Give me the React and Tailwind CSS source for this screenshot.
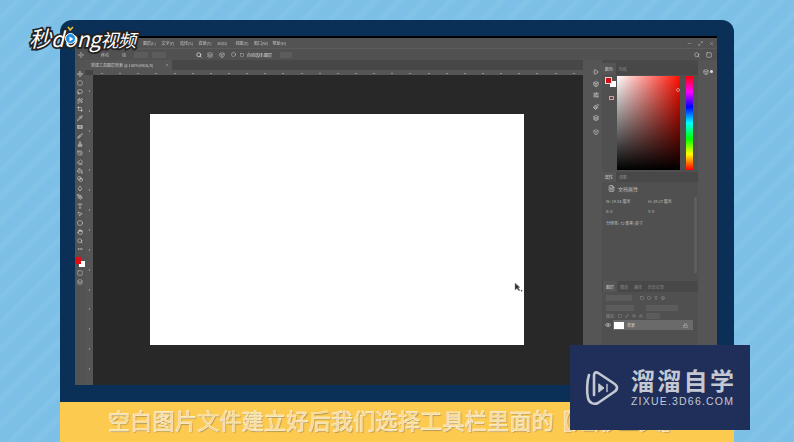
import React from "react";
import {
  Move, SquareDashed, Lasso, Wand2, Crop, Pipette, Bandage, Brush, Stamp, History,
  Eraser, PaintBucket, Blend, Droplet, PenTool, Type, MousePointer2, Circle, Hand, Search,
  MoreHorizontal, Square, Layers, Play, SlidersHorizontal, Paintbrush,
  Box, Eye, Lock, Minus, Maximize2, X, FileText,
} from "lucide-react";

const cjk = { fontFamily: '"Noto Sans CJK SC", "Noto Sans", sans-serif' };

const menus = ["图层(L)", "文字(Y)", "选择(S)", "滤镜(T)", "3D(D)", "视图(V)", "窗口(W)", "帮助(H)"];
const tools = [Move, SquareDashed, Lasso, Wand2, Crop, Pipette, Bandage, Brush, Stamp, History, Eraser, PaintBucket, Blend, Droplet, PenTool, Type, MousePointer2, Circle, Hand, Search, MoreHorizontal];
const dockIcons = [Play, Box, SlidersHorizontal, Paintbrush, Layers];

const Tab = ({ children, active }) => (
  <span className={`h-full flex items-center px-[3px] text-[4px] ${active ? "bg-[#555] text-[#ccc]" : "text-[#8a8a8a]"}`}>
    {children}
  </span>
);

const Field = ({ w }) => <span className="h-[6px] bg-[#5c5c5c]" style={{ width: w }} />;

const Toolbar = () => (
  <div className="w-[10px] bg-[#535353] flex flex-col items-center pt-[10px] blur-[0.3px]">
    {tools.map((Icon, i) => (
      <div key={i} className="h-[8.75px] flex items-center justify-center shrink-0">
        <Icon size={6} strokeWidth={2.2} className="text-[#d8d8d8]" />
      </div>
    ))}
    <div className="relative w-[10px] h-[11px] mt-[3px] shrink-0">
      <span className="absolute left-[4px] top-[4px] w-[6px] h-[6px] bg-white" />
      <span className="absolute left-[0px] top-[0px] w-[6px] h-[7px] bg-[#e00e12]" />
    </div>
    <Square size={6} className="text-[#ccc] mt-[2px]" />
    <Layers size={6} className="text-[#ccc] mt-[3px]" />
  </div>
);

const ColorPanel = () => (
  <div className="h-[97px] flex pl-[2px] pr-[5px] pt-[1px] bg-[#505050]">
    <div className="w-[13px] relative">
      <span className="absolute left-[6px] top-[5px] w-[6px] h-[6px] bg-white" />
      <span className="absolute left-[1px] top-[1px] w-[7px] h-[7px] bg-[#d40f14] border border-[#ddd]" />
      <span className="absolute left-[5px] top-[20px] w-[5px] h-[4px] border border-[#d99]" />
    </div>
    <div className="relative w-[63px] h-[94px] bg-[linear-gradient(to_top,#000,transparent),linear-gradient(to_right,#fff,#ff0f00)]">
      <span className="absolute right-[0px] top-[12px] w-[4px] h-[4px] rounded-full border border-[#d88]" />
    </div>
    <div className="ml-[6px] w-[7px] h-[94px] bg-[linear-gradient(to_bottom,#f00_0%,#f0f_17%,#00f_33%,#0ff_50%,#0f0_67%,#ff0_83%,#f00_100%)]" />
  </div>
);

const Properties = () => (
  <div className="h-[99px] bg-[#505050] text-[4px] text-[#bdbdbd] px-[4px] relative" style={cjk}>
    <div className="flex items-center gap-[3px] pt-[3px] pl-[2px]">
      <FileText size={7} className="text-[#ddd]" />
      <span className="text-[5px]">文档属性</span>
    </div>
    <div className="grid grid-cols-2 mt-[5px] gap-y-[4px] w-[84px]">
      <span>W: 19.54 厘米</span>
      <span>H: 29.27 厘米</span>
      <span>X: 0</span>
      <span>Y: 0</span>
    </div>
    <div className="mt-[6px]">分辨率: 72 像素/英寸</div>
    <span className="absolute right-[1px] top-[15px] w-[3px] h-[76px] bg-[#5e5e5e]" />
  </div>
);

const LayersPanel = () => (
  <div className="flex-1 bg-[#505050] text-[4px] text-[#999]" style={cjk}>
    <div className="h-[11px] bg-[#484848] flex items-center pl-[1px] text-[#999]">
      <Tab active>图层</Tab>
      <Tab>通道</Tab>
      <Tab>路径</Tab>
      <Tab>历史记录</Tab>
    </div>
    <div className="h-[11px] flex items-center gap-[8px] px-[4px]">
      <Field w={26} />
      <span className="flex gap-[3px] text-[#aaa]">
        <Square size={4} />
        <Circle size={4} />
        <Type size={4} />
        <Box size={4} />
      </span>
    </div>
    <div className="h-[9px] flex items-center gap-[12px] px-[4px]">
      <Field w={28} />
      <Field w={32} />
    </div>
    <div className="h-[8px] flex items-center gap-[3px] px-[4px]">
      <span>锁定:</span>
      <Square size={4} />
      <Brush size={4} />
      <Move size={4} />
      <Lock size={4} />
      <Field w={14} />
    </div>
    <div className="h-[10px] flex items-center">
      <span className="w-[11px] flex justify-center">
        <Eye size={6} className="text-[#ddd]" />
      </span>
      <div className="w-[80px] h-full bg-[#6a6a6a] flex items-center pl-[1px]">
        <span className="w-[10px] h-[7px] bg-white" />
        <span className="ml-[3px] text-[#ddd]">背景</span>
        <Lock size={5} className="ml-auto mr-[5px] text-[#ccc]" />
      </div>
    </div>
  </div>
);

const Photoshop = () => (
  <div className="h-[347px] flex flex-col bg-[#535353]" style={cjk}>
    <div className="h-[10px] flex items-center pl-[68px] pr-[3px] text-[4px] text-[#c4c4c4] blur-[0.2px]">
      {menus.map((m) => (
        <span key={m} className="w-[18.5px] shrink-0">{m}</span>
      ))}
      <span className="ml-auto flex gap-[6px] text-[#bbb]">
        <Minus size={5} />
        <Maximize2 size={5} />
        <X size={5} />
      </span>
    </div>
    <div className="h-[12px] border-t border-[#5c5c5c] bg-[#515151] flex items-center pl-[3px] pr-[5px] text-[4px] text-[#bbb] blur-[0.2px]">
      <Move size={6} />
      <span className="ml-[17px]">移动</span>
      <span className="ml-[13px]">组</span>
      <span className="ml-[8px] w-[60px] flex gap-[4px]">
        <Field w={14} />
        <Field w={14} />
      </span>
      <Search size={6} strokeWidth={3} className="ml-[2px] text-[#ddd]" />
      <Layers size={6} className="ml-[5px] text-[#ccc]" />
      <Box size={6} className="ml-[6px] text-[#ccc]" />
      <Circle size={5} className="ml-[6px] text-[#ddd]" />
      <Square size={4} className="ml-[4px] text-[#ddd]" />
      <span className="ml-[3px] text-[#ddd]">自动选择:图层</span>
      <span className="ml-[8px] flex"><Field w={12} /></span>
      <span className="ml-auto flex gap-[6px] text-[#ddd]">
        <Search size={6} />
        <Square size={6} />
      </span>
    </div>
    <div className="flex-1 flex min-h-0">
      <Toolbar />
      <div className="flex-1 flex flex-col min-w-0 bg-[#444]">
        <div className="h-[10px] flex items-stretch bg-[#474747]">
          <span className="w-[87px] bg-[#555] flex items-center justify-between pl-[6px] pr-[3px] text-[4px] text-[#c8c8c8] blur-[0.2px]">
            新建工具图层草案 @ 100%(RGB/8)
            <X size={4} />
          </span>
        </div>
        <div className="h-[5px] bg-[#555] ml-[8px] flex justify-around items-end pb-[1px]">
          {Array.from({ length: 27 }).map((_, i) => (
            <span key={i} className="w-[2px] h-[1px] bg-[#8d8d8d]" />
          ))}
        </div>
        <div className="flex-1 flex min-h-0">
          <div className="w-[8px] bg-[#555] flex flex-col justify-around items-center py-[6px]">
            {Array.from({ length: 15 }).map((_, i) => (
              <span key={i} className="w-[1px] h-[2px] bg-[#8d8d8d]" />
            ))}
          </div>
          <div className="flex-1 bg-[#282828] pl-[57px] pt-[39px] relative">
            <div className="w-[374px] h-[231px] bg-white" />
            <svg className="absolute left-[421px] top-[208px]" width="10" height="10" viewBox="0 0 10 10">
              <path d="M1 0 L1 7 L3 5.4 L5 8 L5.8 7 L4.2 4.8 L6 4.4 Z" fill="#2c2c2c" stroke="#999" strokeWidth="0.5" />
              <circle cx="7.6" cy="7.8" r="0.8" fill="#333" />
            </svg>
          </div>
        </div>
      </div>
      <div className="w-[134px] flex">
        <div className="w-[19px] flex flex-col items-center pl-[6px] pt-[9px] gap-[5.5px] bg-[#555]">
          {dockIcons.map((Icon, i) => (
            <Icon key={i} size={6} strokeWidth={2.4} className="text-[#ddd]" />
          ))}
          <Box size={6} className="mt-[2.5px] text-[#ccc]" />
        </div>
        <div className="w-[96px] flex flex-col blur-[0.2px]">
          <div className="h-[3px] bg-[#4a4a4a]" />
          <div className="h-[12px] bg-[#484848] flex items-center text-[4px]">
            <Tab active>颜色</Tab>
            <Tab>色板</Tab>
          </div>
          <ColorPanel />
          <div className="h-[10px] bg-[#484848] flex items-center text-[4px]">
            <Tab active>属性</Tab>
            <Tab>调整</Tab>
          </div>
          <Properties />
          <LayersPanel />
        </div>
        <div className="w-[19px] bg-[#555] flex justify-center pt-[9px] gap-[1px] text-[#ddd]">
          <Box size={6} />
          <span className="w-[3px] h-[3px] mt-[1px] rounded-full bg-[#ddd]" />
        </div>
      </div>
    </div>
  </div>
);

const App = () => (
  <div className="relative w-[794px] h-[442px] overflow-hidden bg-[#7fc1e7] bg-[repeating-linear-gradient(135deg,#7dc0e7_0px,#7dc0e7_9px,#84c4e9_13px,#7dc0e7_18px)]">
    <div className="ml-[60px] mt-[20px] w-[674px] flex flex-col">
      <div className="h-[382px] bg-[#0a3058] rounded-t-[12px] pl-[15px] pr-[17px] pt-[16px]">
        <div className="h-[2px] bg-black" />
        <Photoshop />
      </div>
      <div className="h-[40px] bg-[#fdca50] pl-[48px] pt-[3px] whitespace-nowrap text-[22px] tracking-[0.3px] leading-[28px] text-[#f8d27a] [-webkit-text-stroke:0.45px_#fff] [text-shadow:1px_1px_1px_#a8925a]" style={cjk}>
        空白图片文件建立好后我们选择工具栏里面的<span className="-ml-[4px]">【矩形工具】</span>
      </div>
    </div>

    {/* site logo, top left */}
    <div className="absolute left-[29px] top-[22px] flex items-baseline italic text-white leading-[30px] [-webkit-text-stroke:3.5px_#222] [paint-order:stroke_fill] [font-family:'Noto_Sans_CJK_SC',sans-serif]">
      <span className="text-[22px]">秒</span>
      <span className="text-[21px]">d</span>
      <span className="relative text-[21px]">
        o
        <span className="absolute left-[1px] top-[10px] w-[11px] h-[11px] rounded-full bg-[#1f8de8] border border-white flex items-center justify-center">
          <svg width="6" height="6" viewBox="0 0 6 6"><path d="M1.5 0.5 L5.5 3 L1.5 5.5 Z" fill="#fff" /></svg>
        </span>
        <svg className="absolute left-[3px] top-[3px]" width="7" height="5" viewBox="0 0 7 5" fill="none" stroke="#f2c230" strokeWidth="1.6"><path d="M1 1 L3.2 4 L6 1" /></svg>
      </span>
      <span className="text-[21px] tracking-[-0.5px]">ng</span>
      <span className="text-[18px] tracking-[-0.5px]">视频</span>
    </div>

    {/* watermark, bottom right */}
    <div className="absolute left-[570px] top-[345px] w-[180px] h-[85px] bg-[#202f5a] flex items-center pl-[15px] gap-[12px]">
      <svg width="34" height="36" viewBox="0 0 34 36" fill="none" stroke="#c4c8d2" strokeWidth="2.6" strokeLinejoin="round" strokeLinecap="round">
        <path d="M4 5 C2 11 1.5 22 3 28 C4 33 9 35 13 33 L29 22 C33 19.5 33 16 29 13.5 L14 3.5 C11 1.5 9 2 9 6 L9 25" />
        <path d="M14 14 L19 18 L14 22 Z" fill="#c4c8d2" strokeWidth="1" />
        <path d="M22 14.5 L22 21.5" strokeWidth="1.4" />
      </svg>
      <div className="flex flex-col text-[#c4c8d2] pb-[2px]">
        <span className="text-[24px] leading-[30px] font-bold tracking-[2.3px] [font-family:'Noto_Sans_CJK_SC',sans-serif]">溜溜自学</span>
        <span className="text-[10.5px] leading-[13px] tracking-[1.2px] [font-family:'Liberation_Sans',sans-serif]">ZIXUE.3D66.COM</span>
      </div>
    </div>
  </div>
);

export default App;
